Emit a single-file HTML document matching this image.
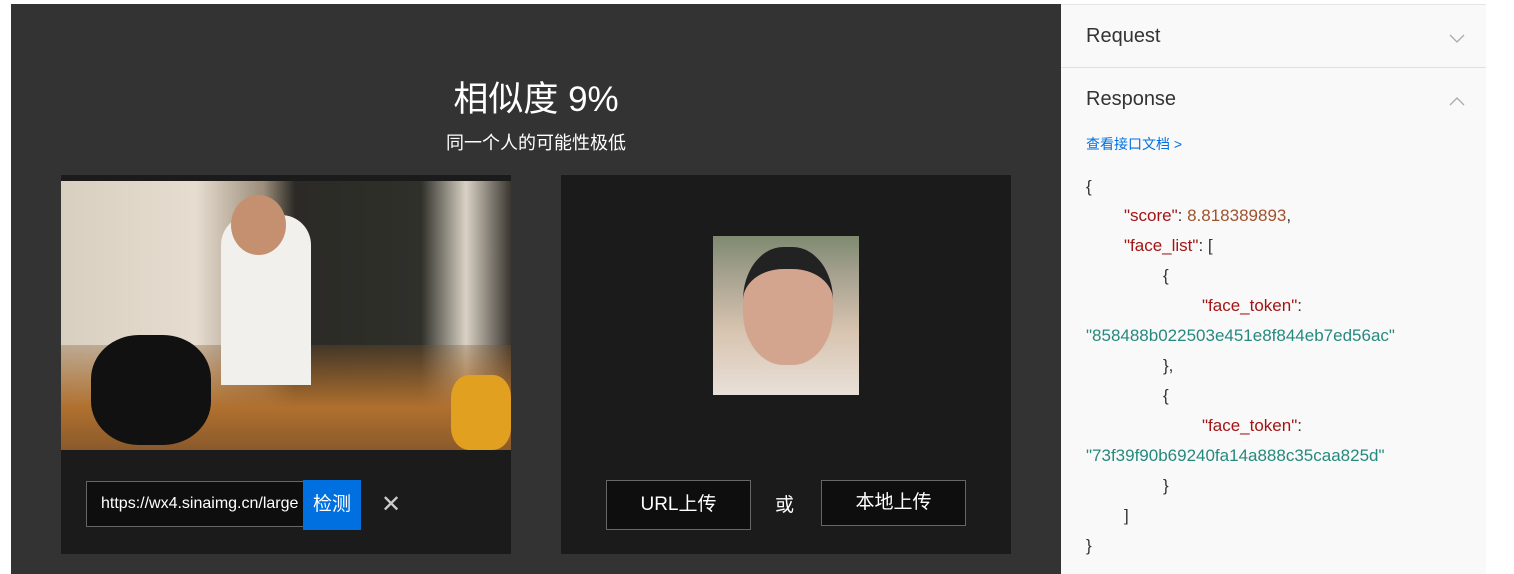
<!DOCTYPE html>
<html><head><meta charset="utf-8"><style>
*{margin:0;padding:0;box-sizing:border-box}
body{width:1514px;height:574px;background:#fff;position:relative;overflow:hidden;font-family:"Liberation Sans","Noto Sans CJK SC",sans-serif}
.dark{position:absolute;left:11px;top:4px;width:1050px;height:570px;background:#333}
.abs{position:absolute}
.card{position:absolute;top:175px;width:450px;height:379px;background:#1b1b1b}
.side{position:absolute;left:1061px;top:4px;width:425px;height:570px;background:#f9f9f9}
.json{position:absolute;left:1086px;font-size:17px;color:#333}
.k{color:#a31515}.n{color:#a0522d}.s{color:#26897e}
</style></head><body>
<div class="dark"></div>
<div class="abs" style="left:11px;top:71px;width:1050px;text-align:center;color:#fff;font-size:35px">相似度 9%</div>
<div class="abs" style="left:11px;top:129px;width:1050px;text-align:center;color:#fff;font-size:18px">同一个人的可能性极低</div>
<div class="card" style="left:61px">
 <div class="abs" style="left:0;top:6px;width:450px;height:269px;background:linear-gradient(90deg,#d8cfc0 0%,#e6ddd0 30%,#9c8d7a 45%,#2b2a26 52%,#2f302a 80%,#d9d2c4 90%,#3a3630 100%)"></div>
 <div class="abs" style="left:0;top:170px;width:450px;height:105px;background:linear-gradient(180deg,rgba(120,80,40,.3),#b0702e 60%,#8a5a2c)"></div>
 <div class="abs" style="left:160px;top:40px;width:90px;height:170px;background:#f2f0ec;border-radius:30px 30px 0 0"></div>
 <div class="abs" style="left:170px;top:20px;width:55px;height:60px;background:#c49070;border-radius:50%"></div>
 <div class="abs" style="left:30px;top:160px;width:120px;height:110px;background:#111;border-radius:40%"></div>
 <div class="abs" style="left:390px;top:200px;width:60px;height:75px;background:#e2a020;border-radius:30%"></div>
 <div class="abs" style="left:25px;top:306px;width:218px;height:46px;border:1px solid #666;background:#0e0e0e;color:#fff;font-size:16px;line-height:44px;padding-left:14px;overflow:hidden;white-space:nowrap">https://wx4.sinaimg.cn/large</div>
 <div class="abs" style="left:242px;top:305px;width:58px;height:50px;background:#0070e0;color:#fff;font-size:19px;line-height:50px;text-align:center">检测</div>
 <div class="abs" style="left:320px;top:315px;color:#ccc;font-size:24px">✕</div>
</div>
<div class="card" style="left:561px">
 <div class="abs" style="left:152px;top:61px;width:146px;height:159px;background:linear-gradient(180deg,#7e8a70 0%,#a7a290 25%,#d8c4b0 60%,#e8e0d8 100%)"></div>
 <div class="abs" style="left:182px;top:72px;width:90px;height:118px;background:#d3a58e;border-radius:45%;border-top:22px solid #222"></div>
 <div class="abs" style="left:45px;top:305px;width:145px;height:50px;border:1px solid #666;background:#0e0e0e;color:#fff;font-size:19px;line-height:48px;text-align:center">URL上传</div>
 <div class="abs" style="left:214px;top:315px;color:#fff;font-size:19px">或</div>
 <div class="abs" style="left:260px;top:305px;width:145px;height:46px;border:1px solid #666;background:#0e0e0e;color:#fff;font-size:19px;line-height:44px;text-align:center">本地上传</div>
</div>
<div class="side">
 <div class="abs" style="left:0;top:0;width:425px;border-top:1px solid #e4e4e4"></div>
 <div class="abs" style="left:25px;top:21px;font-size:20px;color:#333">Request</div>
 <svg class="abs" style="left:388px;top:30px" width="16" height="10"><path d="M1 1L8 8L15 1" fill="none" stroke="#aaa" stroke-width="1.3"/></svg>
 <div class="abs" style="left:0;top:63px;width:425px;border-top:1px solid #e0e0e0"></div>
 <div class="abs" style="left:25px;top:84px;font-size:20px;color:#333">Response</div>
 <svg class="abs" style="left:388px;top:92px" width="16" height="10"><path d="M1 9L8 2L15 9" fill="none" stroke="#aaa" stroke-width="1.3"/></svg>
 <div class="abs" style="left:25px;top:130px;font-size:14px;color:#0070e0">查看接口文档 &gt;</div>
</div>
<div class="json" style="top:177px">{</div>
<div class="json" style="top:206px;left:1124px"><span class="k">"score"</span>: <span class="n">8.818389893</span>,</div>
<div class="json" style="top:236px;left:1124px"><span class="k">"face_list"</span>: [</div>
<div class="json" style="top:266px;left:1163px">{</div>
<div class="json" style="top:296px;left:1202px"><span class="k">"face_token"</span>:</div>
<div class="json" style="top:326px"><span class="s">"858488b022503e451e8f844eb7ed56ac"</span></div>
<div class="json" style="top:356px;left:1163px">},</div>
<div class="json" style="top:386px;left:1163px">{</div>
<div class="json" style="top:416px;left:1202px"><span class="k">"face_token"</span>:</div>
<div class="json" style="top:446px"><span class="s">"73f39f90b69240fa14a888c35caa825d"</span></div>
<div class="json" style="top:476px;left:1163px">}</div>
<div class="json" style="top:506px;left:1124px">]</div>
<div class="json" style="top:536px">}</div>
</body></html>
